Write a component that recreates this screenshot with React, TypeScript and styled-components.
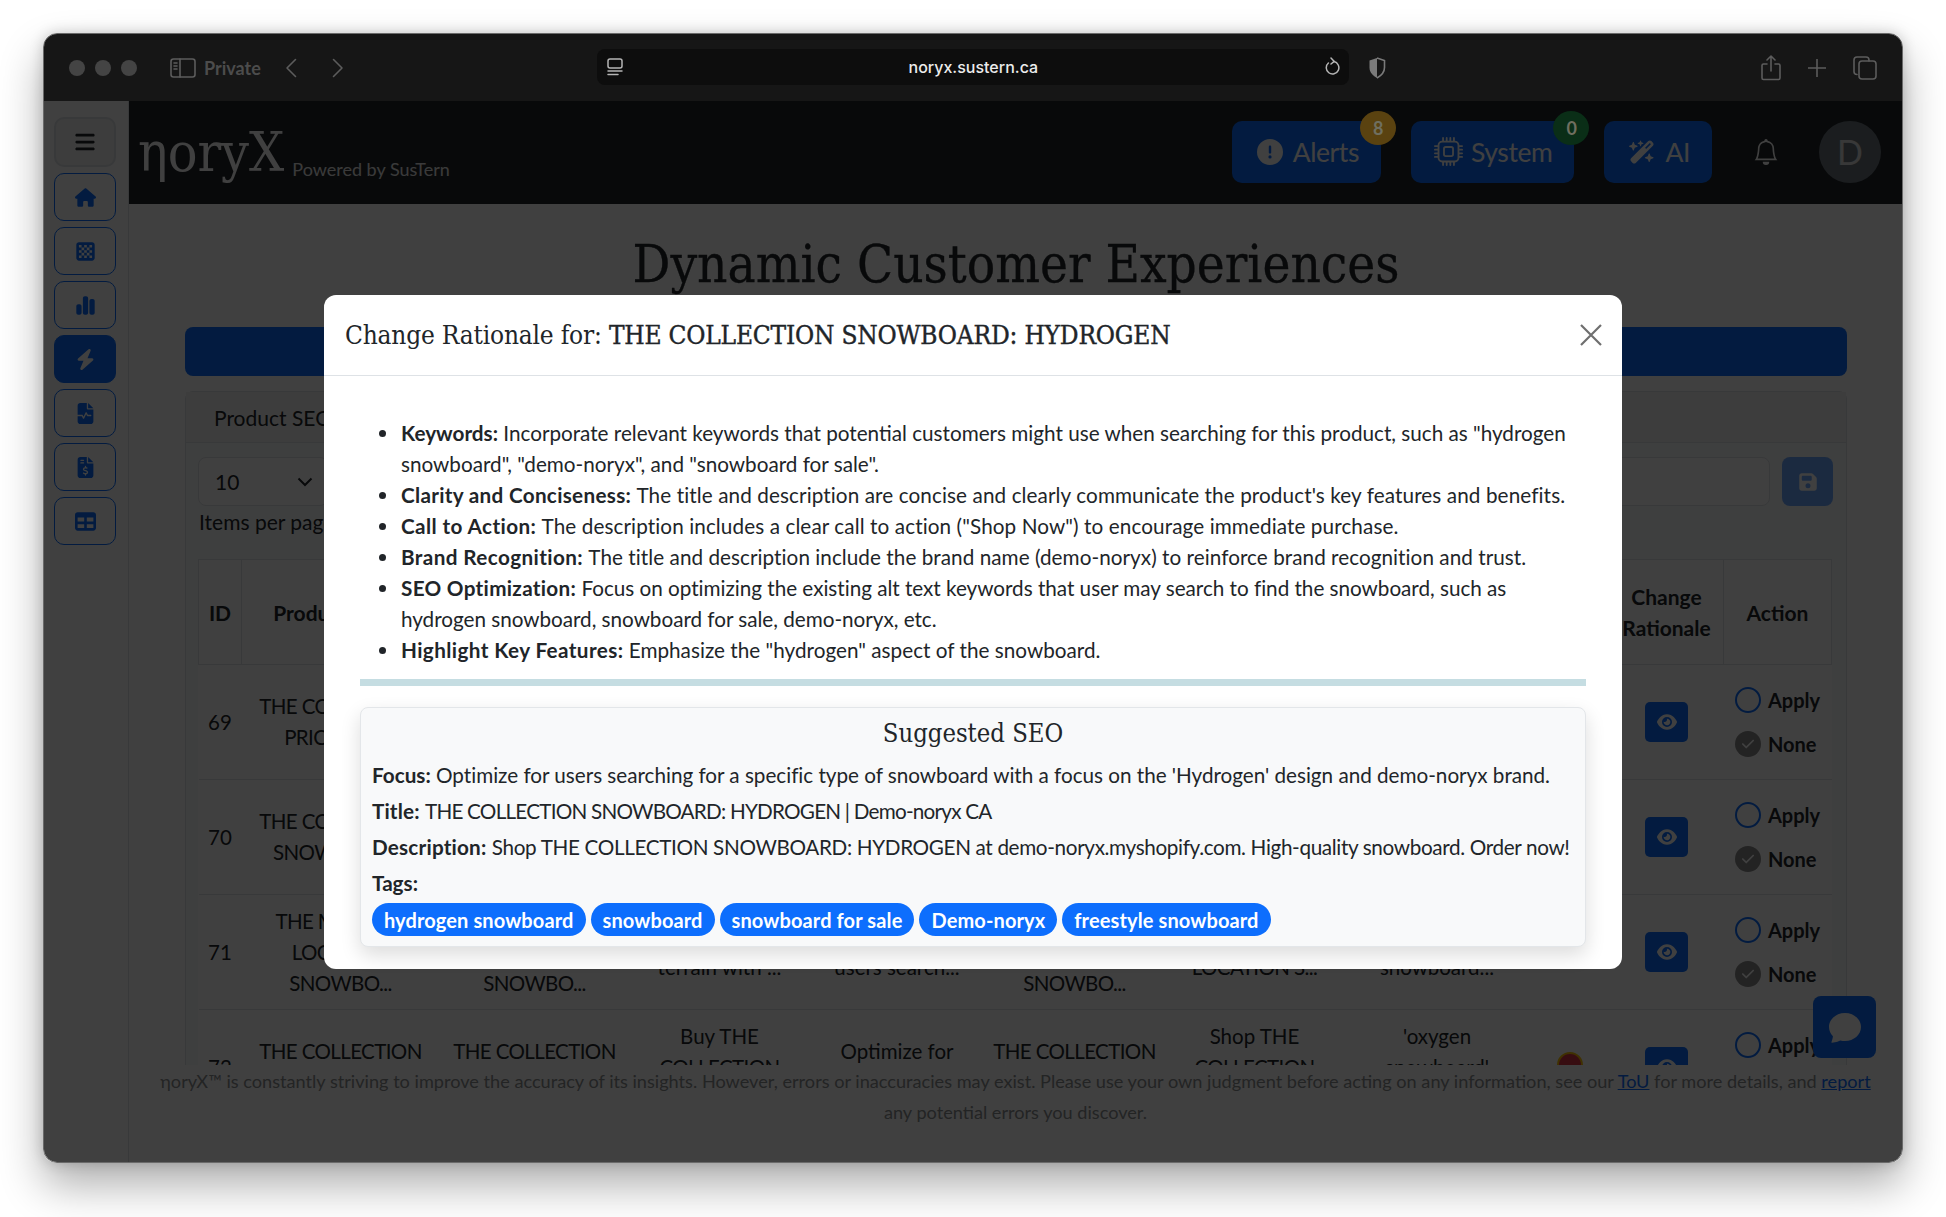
import React from "react"
import styled, { createGlobalStyle } from "styled-components"
import {
  FaHouse,
  FaChessBoard,
  FaChartSimple,
  FaBolt,
  FaFileWaveform,
  FaFileInvoiceDollar,
  FaTable,
  FaBars,
  FaCircleExclamation,
  FaWandMagicSparkles,
  FaFloppyDisk,
  FaEye,
  FaCheck,
} from "react-icons/fa6"
import { BsCpu, BsBell, BsChatFill } from "react-icons/bs"

const bodyFont = `Lato, "Open Sans", sans-serif`
const serifFont = `"DejaVu Serif Condensed", "DejaVu Serif", serif`
const primary = "#0d6efd"

const GlobalStyle = createGlobalStyle`
  html, body {
    margin: 0;
    background: #fff;
    font-family: ${bodyFont};
    color: #212529;
  }
  * { box-sizing: border-box; }
`

// ******************** data ********************
const sideItems = [
  { icon: <FaHouse />, active: false },
  { icon: <FaChessBoard />, active: false },
  { icon: <FaChartSimple />, active: false },
  { icon: <FaBolt />, active: true },
  { icon: <FaFileWaveform />, active: false },
  { icon: <FaFileInvoiceDollar />, active: false },
  { icon: <FaTable />, active: false },
]

const headers = ["ID", "Product Name", "", "", "", "", "", "", "", "Change Rationale", "Action"]

const rows: { id: number; cells: string[][]; dot?: boolean }[] = [
  {
    id: 69,
    cells: [["THE COLLECTION", "PRICE DROP"], [], [], [], [], [], []],
  },
  {
    id: 70,
    cells: [["THE COLLECTION", "SNOWBOARD:"], [], [], [], [], [], []],
  },
  {
    id: 71,
    cells: [
      ["THE MODERN", "LOCATION", "SNOWBO..."],
      ["THE MODERN", "LOCATION", "SNOWBO..."],
      ["Ride the", "terrain with ..."],
      ["Optimize for", "users search..."],
      ["THE MODERN", "LOCATION", "SNOWBO..."],
      ["Shop THE", "LOCATION S..."],
      ["'location", "snowboard..."],
    ],
  },
  {
    id: 72,
    dot: true,
    cells: [
      ["THE COLLECTION", "SNOWBOARD"],
      ["THE COLLECTION", "SNOWBOARD"],
      ["Buy THE", "COLLECTION", "SNOWBO..."],
      ["Optimize for", "users search..."],
      ["THE COLLECTION", "SNOWBOARD"],
      ["Shop THE", "COLLECTION", "SNOWBO..."],
      ["'oxygen", "snowboard'", "'demo..."],
    ],
  },
]

type Line = { label: string; text: string; labelSpacing: number; spacing: number }

// the spacings even out the width difference per line against the reference
const rationale: Line[] = [
  {
    label: "Keywords:",
    text: `Incorporate relevant keywords that potential customers might use when searching for this product, such as "hydrogen snowboard", "demo-noryx", and "snowboard for sale".`,
    labelSpacing: 0,
    spacing: 0,
  },
  {
    label: "Clarity and Conciseness:",
    text: "The title and description are concise and clearly communicate the product's key features and benefits.",
    labelSpacing: 0.3,
    spacing: 0.1,
  },
  {
    label: "Call to Action:",
    text: `The description includes a clear call to action ("Shop Now") to encourage immediate purchase.`,
    labelSpacing: 0.4,
    spacing: 0.1,
  },
  {
    label: "Brand Recognition:",
    text: "The title and description include the brand name (demo-noryx) to reinforce brand recognition and trust.",
    labelSpacing: 0.4,
    spacing: 0.05,
  },
  {
    label: "SEO Optimization:",
    text: "Focus on optimizing the existing alt text keywords that user may search to find the snowboard, such as hydrogen snowboard, snowboard for sale, demo-noryx, etc.",
    labelSpacing: 0.3,
    spacing: -0.02,
  },
  {
    label: "Highlight Key Features:",
    text: `Emphasize the "hydrogen" aspect of the snowboard.`,
    labelSpacing: 0.4,
    spacing: 0.02,
  },
]

const suggested: Line[] = [
  {
    label: "Focus:",
    text: "Optimize for users searching for a specific type of snowboard with a focus on the 'Hydrogen' design and demo-noryx brand.",
    labelSpacing: 0,
    spacing: -0.02,
  },
  {
    label: "Title:",
    text: "THE COLLECTION SNOWBOARD: HYDROGEN | Demo-noryx CA",
    labelSpacing: 0.15,
    spacing: -0.78,
  },
  {
    label: "Description:",
    text: "Shop THE COLLECTION SNOWBOARD: HYDROGEN at demo-noryx.myshopify.com. High-quality snowboard. Order now!",
    labelSpacing: 0.2,
    spacing: -0.35,
  },
]

const tags = ["hydrogen snowboard", "snowboard", "snowboard for sale", "Demo-noryx", "freestyle snowboard"]

export default function App() {
  return (
    <Page>
      <GlobalStyle />
      <Window>
        <Toolbar>
          <Lights>
            <Light />
            <Light />
            <Light />
          </Lights>
          <ToolIcon width="26" height="20" viewBox="0 0 26 20">
            <rect x="1" y="1" width="24" height="18" rx="2.5" />
            <path d="M10 1v18M4 5h3M4 8h3M4 11h3" />
          </ToolIcon>
          <PrivateLabel>Private</PrivateLabel>
          <NavArrows>
            <ToolIcon width="12" height="20" viewBox="0 0 12 20">
              <path d="M10.5 1.5 2 10l8.5 8.5" />
            </ToolIcon>
            <ToolIcon width="12" height="20" viewBox="0 0 12 20">
              <path d="M1.5 1.5 10 10l-8.5 8.5" />
            </ToolIcon>
          </NavArrows>
          <UrlBar>
            <UrlIcon width="16" height="18" viewBox="0 0 16 18">
              <rect x="1" y="1" width="14" height="9" rx="2" />
              <path d="M1 13h14M1 16.5h10" />
            </UrlIcon>
            <UrlText>noryx.sustern.ca</UrlText>
            <UrlIcon width="16" height="20" viewBox="0 0 16 20">
              <path d="M10 4.6A6.3 6.3 0 1 1 4.4 6" />
              <path d="M7 1l3.2 3.4L7 7" />
            </UrlIcon>
          </UrlBar>
          <ShieldIcon width="18" height="22" viewBox="0 0 18 22">
            <path d="M9 1 1.5 3.5v7c0 4.6 3 8 7.5 10.5V1Z" fill="#7a7a7a" />
            <path d="M9 1l7.5 2.5v7c0 4.6-3 8-7.5 10.5" fill="none" stroke="#7a7a7a" strokeWidth="1.6" />
          </ShieldIcon>
          <ToolActions>
            <ToolIcon width="20" height="26" viewBox="0 0 20 26">
              <path d="M6 9H2.5A1.5 1.5 0 0 0 1 10.5V23a1.5 1.5 0 0 0 1.5 1.5h15A1.5 1.5 0 0 0 19 23V10.5A1.5 1.5 0 0 0 17.5 9H14M10 16V1.5M6 5l4-4 4 4" />
            </ToolIcon>
            <ToolIcon width="18" height="18" viewBox="0 0 18 18">
              <path d="M9 0v18M0 9h18" />
            </ToolIcon>
            <ToolIcon width="24" height="24" viewBox="0 0 24 24">
              <rect x="6" y="5" width="17" height="18" rx="3" />
              <path d="M4 18.5A3 3 0 0 1 1 15.5V4a3 3 0 0 1 3-3h9a3 3 0 0 1 3 3v1" />
            </ToolIcon>
          </ToolActions>
        </Toolbar>

        <Body>
          <Sidebar>
            <MenuButton>
              <FaBars />
            </MenuButton>
            {sideItems.map((item, i) => (
              <SideButton key={i} $active={item.active}>
                {item.icon}
              </SideButton>
            ))}
          </Sidebar>

          <Main>
            <Header>
              <Brand>
                <Logo>ηoryX</Logo>
                <Powered>Powered by SusTern</Powered>
              </Brand>
              <HeaderActions>
                <HeaderButton>
                  <FaCircleExclamation />
                  Alerts
                  <Badge $color="#5a4210">8</Badge>
                </HeaderButton>
                <HeaderButton>
                  <CpuIcon />
                  System
                  <Badge $color="#0a2e17">0</Badge>
                </HeaderButton>
                <HeaderButton>
                  <FaWandMagicSparkles />
                  AI
                </HeaderButton>
                <BellWrap>
                  <BsBell />
                </BellWrap>
                <Avatar>D</Avatar>
              </HeaderActions>
            </Header>

            <Scroller>
              <PageTitle>Dynamic Customer Experiences</PageTitle>
              <BlueBar />
              <Card>
                <CardHeader>Product SEO</CardHeader>
                <CardBody>
                  <Controls>
                    <SelectBox>
                      10
                      <Chevron width="16" height="10" viewBox="0 0 16 10">
                        <path d="M1.5 1.5 8 8l6.5-6.5" />
                      </Chevron>
                    </SelectBox>
                    <SearchBox />
                    <SaveButton>
                      <FaFloppyDisk />
                    </SaveButton>
                  </Controls>
                  <ItemsLabel>Items per page</ItemsLabel>
                  <Table>
                    <colgroup>
                      {[43, 198, 190, 180, 175, 180, 180, 185, 80, 114, 108].map((w, i) => (
                        <col key={i} width={w} />
                      ))}
                    </colgroup>
                    <thead>
                      <tr>
                        {headers.map((h, i) => (
                          <Th key={i}>{h}</Th>
                        ))}
                      </tr>
                    </thead>
                    <tbody>
                      {rows.map((row) => (
                        <tr key={row.id}>
                          <Td>{row.id}</Td>
                          {row.cells.map((lines, i) => (
                            <Td key={i}>
                              {lines.map((line, j) => (
                                <CellLine key={j} $caps={line === line.toUpperCase()}>
                                  {line}
                                </CellLine>
                              ))}
                            </Td>
                          ))}
                          <Td>{row.dot && <StatusDot />}</Td>
                          <Td>
                            <EyeButton>
                              <FaEye />
                            </EyeButton>
                          </Td>
                          <Td>
                            <ActionGroup>
                              <ActionOption>
                                <RadioEmpty />
                                Apply
                              </ActionOption>
                              <ActionOption>
                                <RadioChecked>
                                  <FaCheck />
                                </RadioChecked>
                                None
                              </ActionOption>
                            </ActionGroup>
                          </Td>
                        </tr>
                      ))}
                    </tbody>
                  </Table>
                </CardBody>
              </Card>
            </Scroller>

            <Footer>
              ηoryX™ is constantly striving to improve the accuracy of its insights. However, errors or inaccuracies may
              exist. Please use your own judgment before acting on any information, see our <FooterLink>ToU</FooterLink>{" "}
              for more details, and <FooterLink>report</FooterLink> any potential errors you discover.
            </Footer>
            <ChatButton>
              <BsChatFill />
            </ChatButton>
          </Main>

          <Backdrop>
            <Modal>
              <ModalHeader>
                <ModalTitle>
                  Change Rationale for: <strong>THE COLLECTION SNOWBOARD: HYDROGEN</strong>
                </ModalTitle>
                <CloseIcon width="22" height="22" viewBox="0 0 22 22">
                  <path d="M1 1l20 20M21 1 1 21" />
                </CloseIcon>
              </ModalHeader>
              <ModalBody>
                <RationaleList>
                  {rationale.map((item) => (
                    <RationaleItem key={item.label}>
                      <Label $spacing={item.labelSpacing}>{item.label}</Label>{" "}
                      <LineText $spacing={item.spacing}>{item.text}</LineText>
                    </RationaleItem>
                  ))}
                </RationaleList>
                <Divider />
                <SeoCard>
                  <SeoTitle>Suggested SEO</SeoTitle>
                  {suggested.map((item) => (
                    <SeoLine key={item.label}>
                      <Label $spacing={item.labelSpacing}>{item.label}</Label>{" "}
                      <LineText $spacing={item.spacing}>{item.text}</LineText>
                    </SeoLine>
                  ))}
                  <SeoLine>
                    <Label $spacing={0}>Tags:</Label>
                  </SeoLine>
                  <TagRow>
                    {tags.map((tag) => (
                      <Tag key={tag}>{tag}</Tag>
                    ))}
                  </TagRow>
                </SeoCard>
              </ModalBody>
            </Modal>
          </Backdrop>
        </Body>
      </Window>
    </Page>
  )
}

const Page = styled.div`
  width: 1946px;
  height: 1217px;
  padding: 33px 43px 54px 43px;
  overflow: hidden;
`

const Window = styled.div`
  height: 1130px;
  display: flex;
  flex-direction: column;
  overflow: hidden;
  border-radius: 14px;
  border: 1px solid #6a6a6a;
  box-shadow: 0 22px 44px rgba(0, 0, 0, 0.32), 0 0 14px rgba(0, 0, 0, 0.18);
`

const Toolbar = styled.div`
  height: 67px;
  flex: none;
  display: flex;
  align-items: center;
  background: #161616;
  padding: 0 25px 0 25px;
`

const Lights = styled.div`
  display: flex;
  gap: 10px;
  margin-right: 33px;
`

const Light = styled.span`
  width: 16px;
  height: 16px;
  border-radius: 50%;
  background: #444;
`

const ToolIcon = styled.svg`
  fill: none;
  stroke: #5c5c5c;
  stroke-width: 1.6;
  stroke-linecap: round;
  stroke-linejoin: round;
  flex: none;
`

const PrivateLabel = styled.span`
  margin-left: 8px;
  font-size: 18px;
  font-weight: 700;
  color: #4c4c4c;
`

const NavArrows = styled.div`
  display: flex;
  gap: 35px;
  margin-left: 24px;
`

const UrlBar = styled.div`
  margin-left: 253px;
  width: 752px;
  height: 36px;
  margin-top: -1px;
  display: flex;
  align-items: center;
  justify-content: space-between;
  padding: 0 9px 0 10px;
  border-radius: 8px;
  background: #0d0d0d;
`

const UrlIcon = styled.svg`
  fill: none;
  stroke: #b5b5b5;
  stroke-width: 1.5;
  stroke-linecap: round;
`

const UrlText = styled.span`
  font-family: Inter, sans-serif;
  font-size: 16px;
  font-weight: 500;
  color: #ececec;
`

const ShieldIcon = styled.svg`
  margin-left: 19px;
`

const ToolActions = styled.div`
  margin-left: auto;
  display: flex;
  align-items: center;
  gap: 27px;
`

const Body = styled.div`
  position: relative;
  flex: 1;
  min-height: 0;
  display: flex;
  background: #fff;
`

const Sidebar = styled.nav`
  width: 85px;
  flex: none;
  display: flex;
  flex-direction: column;
  gap: 6px;
  padding: 16px 0 0 10px;
  border-right: 1px solid #dee2e6;
`

const MenuButton = styled.div`
  width: 62px;
  height: 50px;
  display: flex;
  align-items: center;
  justify-content: center;
  font-size: 22px;
  color: #212529;
  background: #f1f1f1;
  border: 2px solid #dee2e6;
  border-radius: 10px;
`

const SideButton = styled.div<{ $active: boolean }>`
  width: 62px;
  height: 48px;
  display: flex;
  align-items: center;
  justify-content: center;
  font-size: 21px;
  border-radius: 10px;
  border: 1.5px solid ${primary};
  color: ${(p) => (p.$active ? "#fff" : primary)};
  background: ${(p) => (p.$active ? primary : "transparent")};
`

const Main = styled.main`
  position: relative;
  flex: 1;
  min-width: 0;
  display: flex;
  flex-direction: column;
`

const Header = styled.header`
  height: 103px;
  flex: none;
  display: flex;
  align-items: center;
  justify-content: space-between;
  padding: 0 21px 0 9px;
  background: #212529;
  color: #fff;
`

const Brand = styled.div`
  display: flex;
  align-items: flex-end;
  gap: 8px;
  margin-top: -2px;
`

const Logo = styled.span`
  font-family: ${serifFont};
  font-size: 55px;
  line-height: 60px;
  color: #fff;
`

const Powered = styled.span`
  font-size: 18px;
  line-height: 25px;
  color: #e8e8e8;
`

const HeaderActions = styled.div`
  display: flex;
  align-items: center;
  gap: 30px;
`

const HeaderButton = styled.div`
  position: relative;
  height: 62px;
  margin-top: -2px;
  display: flex;
  align-items: center;
  gap: 10px;
  padding: 0 22px 0 25px;
  font-size: 26.5px;
  letter-spacing: -0.4px;
  color: #fff;
  background: ${primary};
  border-radius: 10px;

  svg {
    font-size: 26px;
  }
`

const CpuIcon = styled(BsCpu)`
  && {
    font-size: 29px;
    margin: 0 -2px 0 -2px;
  }
`

const Badge = styled.span<{ $color: string }>`
  position: absolute;
  right: -15px;
  top: -10px;
  z-index: 11;
  width: 36px;
  height: 34px;
  display: flex;
  align-items: center;
  justify-content: center;
  border-radius: 50%;
  font-size: 18px;
  font-weight: 700;
  color: #6f6f60;
  background: ${(p) => p.$color};
`

const BellWrap = styled.div`
  margin-left: 11px;
  margin-top: -2px;
  font-size: 26px;
  display: flex;
`

const Avatar = styled.div`
  width: 62px;
  height: 62px;
  margin-left: 10px;
  margin-top: -2px;
  display: flex;
  align-items: center;
  justify-content: center;
  border-radius: 50%;
  font-size: 34px;
  color: #e0e0e0;
  background: #6c757d;
`

const Scroller = styled.div`
  height: 861px;
  flex: none;
  overflow: hidden;
  padding: 24px 55px 0 56px;
`

const PageTitle = styled.h1`
  margin: 0 0 27px;
  height: 72px;
  text-align: center;
  font-family: ${serifFont};
  font-size: 52.5px;
  font-weight: 400;
  line-height: 72px;
  -webkit-text-stroke: 0.3px #212529;
`

const BlueBar = styled.div`
  height: 49px;
  border-radius: 8px;
  background: ${primary};
`

const Card = styled.section`
  margin-top: 15px;
  border: 1px solid #dee2e6;
  border-radius: 8px;
  background: #f8f9fa;
`

const CardHeader = styled.div`
  height: 51px;
  display: flex;
  align-items: center;
  padding: 0 28px;
  font-size: 21px;
  background: #f3f3f3;
  border-bottom: 1px solid #dee2e6;
`

const CardBody = styled.div`
  padding: 14px 13px 0 12px;
`

const Controls = styled.div`
  display: flex;
  gap: 12px;
`

const SelectBox = styled.div`
  width: 130px;
  height: 49px;
  flex: none;
  display: flex;
  align-items: center;
  justify-content: space-between;
  padding: 0 14px 0 16px;
  font-size: 21px;
  background: #fff;
  border: 1px solid #dee2e6;
  border-radius: 8px;
`

const Chevron = styled.svg`
  fill: none;
  stroke: #212529;
  stroke-width: 2;
`

const SearchBox = styled.div`
  flex: 1;
  height: 49px;
  background: #fff;
  border: 1px solid #dee2e6;
  border-radius: 8px;
`

const SaveButton = styled.div`
  width: 51px;
  height: 49px;
  flex: none;
  display: flex;
  align-items: center;
  justify-content: center;
  font-size: 20px;
  color: #fff;
  background: #6ea8fe;
  border-radius: 8px;
`

const ItemsLabel = styled.div`
  margin: 1px 0 22px 1px;
  font-size: 21px;
  line-height: 30px;
`

const Table = styled.table`
  width: 1633px;
  table-layout: fixed;
  border-collapse: collapse;
  background: #fff;
  font-size: 20.5px;
`

const Th = styled.th`
  height: 105px;
  padding: 0 6px;
  font-size: 21px;
  line-height: 31px;
  font-weight: 700;
  text-align: center;
  border: 1px solid #dee2e6;
`

const Td = styled.td`
  height: 115px;
  padding: 0;
  text-align: center;
  vertical-align: middle;
  border-bottom: 1px solid #dee2e6;
`

const CellLine = styled.div<{ $caps: boolean }>`
  line-height: 31px;
  white-space: nowrap;
  letter-spacing: ${(p) => (p.$caps ? "-0.6px" : "0")};
`

const StatusDot = styled.span`
  display: inline-block;
  width: 26px;
  height: 26px;
  border-radius: 50%;
  background: #dc3545;
  border: 2px solid #ffc107;
`

const EyeButton = styled.span`
  display: inline-flex;
  align-items: center;
  justify-content: center;
  width: 43px;
  height: 40px;
  font-size: 20px;
  color: #fff;
  background: ${primary};
  border-radius: 5px;
`

const ActionGroup = styled.div`
  display: inline-flex;
  flex-direction: column;
  gap: 18px;
`

const ActionOption = styled.div`
  display: flex;
  align-items: center;
  gap: 7px;
  line-height: 26px;
  font-size: 20px;
  font-weight: 700;
`

const RadioEmpty = styled.span`
  width: 26px;
  height: 26px;
  flex: none;
  border-radius: 50%;
  border: 2px solid ${primary};
  background: #fff;
`

const RadioChecked = styled.span`
  width: 26px;
  height: 26px;
  flex: none;
  display: flex;
  align-items: center;
  justify-content: center;
  font-size: 14px;
  border-radius: 50%;
  color: #fff;
  background: #8c8c8c;
`

const Footer = styled.footer`
  padding: 1px 20px 0;
  text-align: center;
  font-size: 18.15px;
  line-height: 31px;
  color: #8c8f91;
`

const FooterLink = styled.a`
  color: ${primary};
  text-decoration: underline;
`

const ChatButton = styled.div`
  position: absolute;
  right: 26px;
  bottom: 104px;
  width: 63px;
  height: 62px;
  display: flex;
  align-items: center;
  justify-content: center;
  font-size: 32px;
  color: #fff;
  background: ${primary};
  border-radius: 8px;
`

const Backdrop = styled.div`
  position: absolute;
  inset: 0;
  z-index: 10;
  display: flex;
  justify-content: center;
  align-items: flex-start;
  padding-top: 194px;
  background: rgba(0, 0, 0, 0.75);
`

const Modal = styled.div`
  width: 1298px;
  background: #fff;
  border-radius: 12px;
  z-index: 12;
`

const ModalHeader = styled.div`
  height: 81px;
  display: flex;
  align-items: center;
  justify-content: space-between;
  padding: 0 20px 0 21px;
  border-bottom: 1px solid #dee2e6;
`

const ModalTitle = styled.h5`
  margin: 0;
  font-family: ${serifFont};
  font-size: 26px;
  letter-spacing: -0.2px;
  font-weight: 400;
  color: #212529;

  strong {
    font-weight: 400;
    -webkit-text-stroke: 0.4px #212529;
  }
`

const CloseIcon = styled.svg`
  stroke: #6f6f6f;
  stroke-width: 2.2;
  fill: none;
`

const ModalBody = styled.div`
  padding: 42px 36px 22px;
`

const RationaleList = styled.ul`
  margin: 0;
  padding-left: 41px;
  list-style: none;
  font-size: 20.7px;
  line-height: 31px;
`

const RationaleItem = styled.li`
  position: relative;

  &::before {
    content: "";
    position: absolute;
    left: -22px;
    top: 12px;
    width: 7px;
    height: 7px;
    border-radius: 50%;
    background: #212529;
  }
`

const Label = styled.strong<{ $spacing: number }>`
  letter-spacing: ${(p) => p.$spacing}px;
`

const LineText = styled.span<{ $spacing: number }>`
  letter-spacing: ${(p) => p.$spacing}px;
`

const Divider = styled.div`
  height: 7px;
  margin: 13px 0 21px;
  background: #c5dde2;
`

const SeoCard = styled.div`
  height: 240px;
  padding: 6px 11px;
  background: #f8f9fa;
  border: 1px solid #e3e6e9;
  border-radius: 8px;
  box-shadow: 0 8px 20px rgba(0, 0, 0, 0.14);
`

const SeoTitle = styled.div`
  height: 39px;
  margin-bottom: 7px;
  text-align: center;
  font-family: ${serifFont};
  font-size: 25.4px;
  line-height: 39px;
`

const SeoLine = styled.div`
  margin-bottom: 5px;
  font-size: 20.7px;
  line-height: 31px;
  white-space: nowrap;
`

const TagRow = styled.div`
  display: flex;
  gap: 5px;
  margin-top: -1px;
`

const Tag = styled.span`
  height: 33px;
  display: flex;
  align-items: center;
  padding: 0 12px;
  font-size: 20px;
  font-weight: 700;
  letter-spacing: 0.12px;
  color: #fff;
  background: ${primary};
  border-radius: 17px;
`
